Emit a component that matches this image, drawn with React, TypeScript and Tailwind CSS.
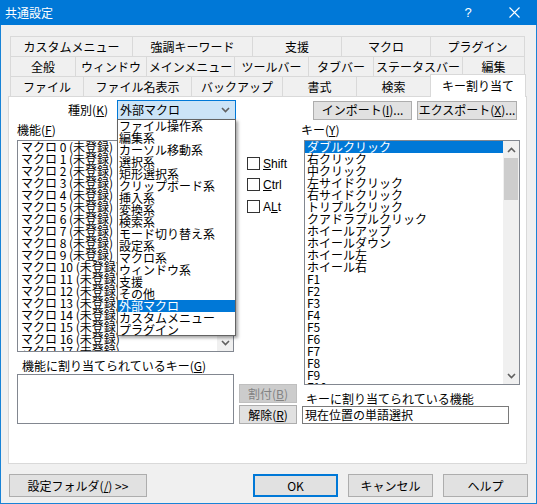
import React from "react";

const tabRow1 = [
  { label: "カスタムメニュー", w: "w-[122px]" },
  { label: "強調キーワード", w: "w-[120px]" },
  { label: "支援", w: "w-[89px]" },
  { label: "マクロ", w: "w-[89px]" },
  { label: "プラグイン", w: "w-[95px]" },
];

const tabRow2 = [
  { label: "全般", w: "w-[65px]" },
  { label: "ウィンドウ", w: "w-[71px]" },
  { label: "メインメニュー", w: "w-[88px]" },
  { label: "ツールバー", w: "w-[74px]" },
  { label: "タブバー", w: "w-[65px]" },
  { label: "ステータスバー", w: "w-[89px]" },
  { label: "編集", w: "w-[63px]" },
];

const tabRow3 = [
  { label: "ファイル", w: "w-[73px]" },
  { label: "ファイル名表示", w: "w-[108px]" },
  { label: "バックアップ", w: "w-[91px]" },
  { label: "書式", w: "w-[74px]" },
  { label: "検索", w: "w-[74px]" },
];

const categories = [
  "ファイル操作系",
  "編集系",
  "カーソル移動系",
  "選択系",
  "矩形選択系",
  "クリップボード系",
  "挿入系",
  "変換系",
  "検索系",
  "モード切り替え系",
  "設定系",
  "マクロ系",
  "ウィンドウ系",
  "支援",
  "その他",
  "外部マクロ",
  "カスタムメニュー",
  "プラグイン",
];

const keys = [
  "ダブルクリック",
  "右クリック",
  "中クリック",
  "左サイドクリック",
  "右サイドクリック",
  "トリプルクリック",
  "クアドラプルクリック",
  "ホイールアップ",
  "ホイールダウン",
  "ホイール左",
  "ホイール右",
  "F1",
  "F2",
  "F3",
  "F4",
  "F5",
  "F6",
  "F7",
  "F8",
  "F9",
  "F10",
];

const macros = Array.from({ length: 18 }, (_, i) => `マクロ ${i} (未登録)`);

function Chevron({ up = false }: { up?: boolean }) {
  return (
    <svg width="9" height="6" viewBox="0 0 9 6">
      <polyline
        points={up ? "1,5 4.5,1.5 8,5" : "1,1 4.5,4.5 8,1"}
        fill="none"
        stroke="#606060"
        strokeWidth="1.6"
      />
    </svg>
  );
}

function TabRow({ tabs }: { tabs: { label: string; w: string }[] }) {
  return (
    <div className="flex h-[20px]">
      {tabs.map((t, i) => (
        <div
          key={t.label}
          className={`${t.w} h-[20px] border-t border-l border-[#d9d9d9] flex items-center justify-center text-[12px] leading-[12px] ${
            i === tabs.length - 1 ? "border-r" : ""
          }`}
        >
          {t.label}
        </div>
      ))}
    </div>
  );
}

function Check({ children }: { children: React.ReactNode }) {
  return (
    <div className="flex items-center h-[13px]">
      <div className="w-[13px] h-[13px] border border-[#333] bg-white" />
      <span className="ml-[3px] text-[12px] leading-[12px] font-['Liberation_Sans',sans-serif]">{children}</span>
    </div>
  );
}

function Btn({ children, className = "", disabled = false }: { children: React.ReactNode; className?: string; disabled?: boolean }) {
  return (
    <div
      className={`flex items-center justify-center text-[12px] leading-[12px] border ${
        disabled ? "bg-[#cccccc] border-[#bfbfbf] text-[#838383]" : "bg-[#e1e1e1] border-[#adadad] text-black"
      } ${className}`}
    >
      {children}
    </div>
  );
}

export default function App() {
  return (
    <div className="w-[537px] h-[504px] bg-[#f0f0f0] border-x border-b border-[#1883d7] flex flex-col font-['Noto_Sans_CJK_JP',sans-serif] text-black select-none">
      {/* タイトルバー */}
      <div className="h-[25px] -mx-px bg-[#0078d7] flex items-center text-white">
        <span className="ml-[5px] text-[12px] leading-[12px]">共通設定</span>
        <div className="ml-auto flex items-center">
          <span className="w-[46px] text-center text-[13px] font-['Liberation_Sans',sans-serif]">?</span>
          <div className="w-[46px] flex justify-center">
            <svg width="11" height="11" viewBox="0 0 11 11">
              <path d="M0.5 0.5 L10.5 10.5 M10.5 0.5 L0.5 10.5" stroke="white" strokeWidth="1.1" />
            </svg>
          </div>
        </div>
      </div>

      {/* タブ */}
      <div className="ml-[9px] mt-[11px] flex flex-col">
        <TabRow tabs={tabRow1} />
        <TabRow tabs={tabRow2} />
        <div className="flex h-[20px]">
          {tabRow3.map((t) => (
            <div
              key={t.label}
              className={`${t.w} h-[20px] border-t border-l border-[#d9d9d9] flex items-center justify-center text-[12px] leading-[12px]`}
            >
              {t.label}
            </div>
          ))}
          <div className="w-[96px] h-[23px] -mt-[2px] relative z-10 bg-white border-t border-x border-[#d9d9d9] flex items-center justify-center text-[12px] leading-[12px]">
            キー割り当て
          </div>
        </div>
      </div>

      {/* パネル */}
      <div className="ml-[7px] w-[519px] h-[368px] bg-white border border-[#d9d9d9] flex flex-col pt-[3px]">
        {/* 種別 / インポート */}
        <div className="flex items-center h-[20px]">
          <div className="w-[99px] text-right text-[12px] leading-[12px]">
            種別(<span className="underline">K</span>)
          </div>
          <div className="relative ml-[9px] z-20">
            <div className="w-[119px] h-[20px] bg-[#cce4f7] border border-[#0078d7] flex items-center pl-[2px] pr-[5px] text-[12px] leading-[12px]">
              <span>外部マクロ</span>
              <span className="ml-auto">
                <Chevron />
              </span>
            </div>
            {/* ドロップダウン */}
            <div className="absolute left-0 top-[19px] w-[119px] h-[217px] bg-white border border-[#646464] shadow-[2px_2px_3px_rgba(0,0,0,0.35)] flex flex-col">
              {categories.map((c) => (
                <div
                  key={c}
                  className={`h-[12px] leading-[12px] text-[12px] pl-[1px] whitespace-nowrap ${
                    c === "外部マクロ" ? "bg-[#0078d7] text-white" : ""
                  }`}
                >
                  {c}
                </div>
              ))}
            </div>
          </div>
          <Btn className="ml-[77px] w-[99px] h-[19px]">
            インポート(<span className="underline">I</span>)...
          </Btn>
          <Btn className="ml-[5px] w-[100px] h-[19px]">
            エクスポート(<span className="underline">X</span>)...
          </Btn>
        </div>

        {/* 本体 */}
        <div className="flex h-[304px]">
          {/* 機能 */}
          <div className="ml-[8px] w-[217px] flex flex-col">
            <div className="h-[20px] flex items-center text-[12px] leading-[12px]">
              機能(<span className="underline">F</span>)
            </div>
            <div className="h-[212px] border border-[#828790] bg-white flex overflow-hidden">
              <div className="flex-1 pl-[3px] pt-[0px]">
                {macros.map((m) => (
                  <div key={m} className="h-[12px] leading-[12px] text-[12px] whitespace-nowrap">
                    {m}
                  </div>
                ))}
              </div>
              <div className="w-[16px] bg-[#f0f0f0] flex flex-col">
                <div className="h-[17px] flex items-center justify-center">
                  <Chevron up />
                </div>
                <div className="mx-[1px] h-[40px] bg-[#cdcdcd]" />
                <div className="mt-auto h-[17px] flex items-center justify-center">
                  <Chevron />
                </div>
              </div>
            </div>
            <div className="h-[22px] pt-[8px] pl-[5px] text-[12px] leading-[12px] whitespace-nowrap">
              機能に割り当てられているキー(<span className="underline">G</span>)
            </div>
            <div className="h-[50px] border border-[#828790] bg-white" />
          </div>

          {/* 修飾キー・ボタン */}
          <div className="w-[67px] flex flex-col justify-between">
            <div className="ml-[13px] mt-[37px] flex flex-col">
              <Check>
                <span className="underline">S</span>hift
              </Check>
              <div className="mt-[8px]">
                <Check>
                  <span className="underline">C</span>trl
                </Check>
              </div>
              <div className="mt-[9px]">
                <Check>
                  A<span className="underline">L</span>t
                </Check>
              </div>
            </div>
            <div className="ml-[5px] flex flex-col gap-[2px]">
              <Btn disabled className="w-[58px] h-[19px]">
                割付(<span className="underline">B</span>)
              </Btn>
              <Btn className="w-[58px] h-[19px]">
                解除(<span className="underline">R</span>)
              </Btn>
            </div>
          </div>

          {/* キー */}
          <div className="w-[219px] flex flex-col">
            <div className="h-[20px] flex items-center text-[12px] leading-[12px]">
              キー(<span className="underline">Y</span>)
            </div>
            <div className="ml-[3px] w-[216px] h-[245px] border border-[#828790] bg-white flex overflow-hidden">
              <div className="flex-1 overflow-hidden">
                {keys.map((k, i) => (
                  <div
                    key={k}
                    className={`h-[12px] leading-[12px] text-[12px] pl-[2px] whitespace-nowrap ${
                      i === 0 ? "bg-[#0078d7] text-white" : ""
                    }`}
                  >
                    {k}
                  </div>
                ))}
              </div>
              <div className="w-[16px] bg-[#f0f0f0] flex flex-col">
                <div className="h-[17px] flex items-center justify-center">
                  <Chevron up />
                </div>
                <div className="mx-[1px] h-[42px] bg-[#cdcdcd]" />
                <div className="mt-auto h-[17px] flex items-center justify-center">
                  <Chevron />
                </div>
              </div>
            </div>
            <div className="h-[21px] pt-[8px] pl-[5px] text-[12px] leading-[12px] whitespace-nowrap">
              キーに割り当てられている機能
            </div>
            <div className="ml-[1px] w-[207px] h-[18px] border border-[#7a7a7a] bg-white flex items-center pl-[2px] text-[12px] leading-[12px]">
              現在位置の単語選択
            </div>
          </div>
        </div>
      </div>

      {/* 下部ボタン */}
      <div className="mt-[10px] flex items-center h-[23px]">
        <Btn className="ml-[8px] w-[138px] h-[23px]">
          設定フォルダ(<span className="underline">/</span>) &gt;&gt;
        </Btn>
        <Btn className="ml-[106px] w-[85px] h-[23px] !border-2 !border-[#0078d7]">OK</Btn>
        <Btn className="ml-[10px] w-[85px] h-[23px]">キャンセル</Btn>
        <Btn className="ml-[10px] w-[85px] h-[23px]">ヘルプ</Btn>
      </div>
    </div>
  );
}
